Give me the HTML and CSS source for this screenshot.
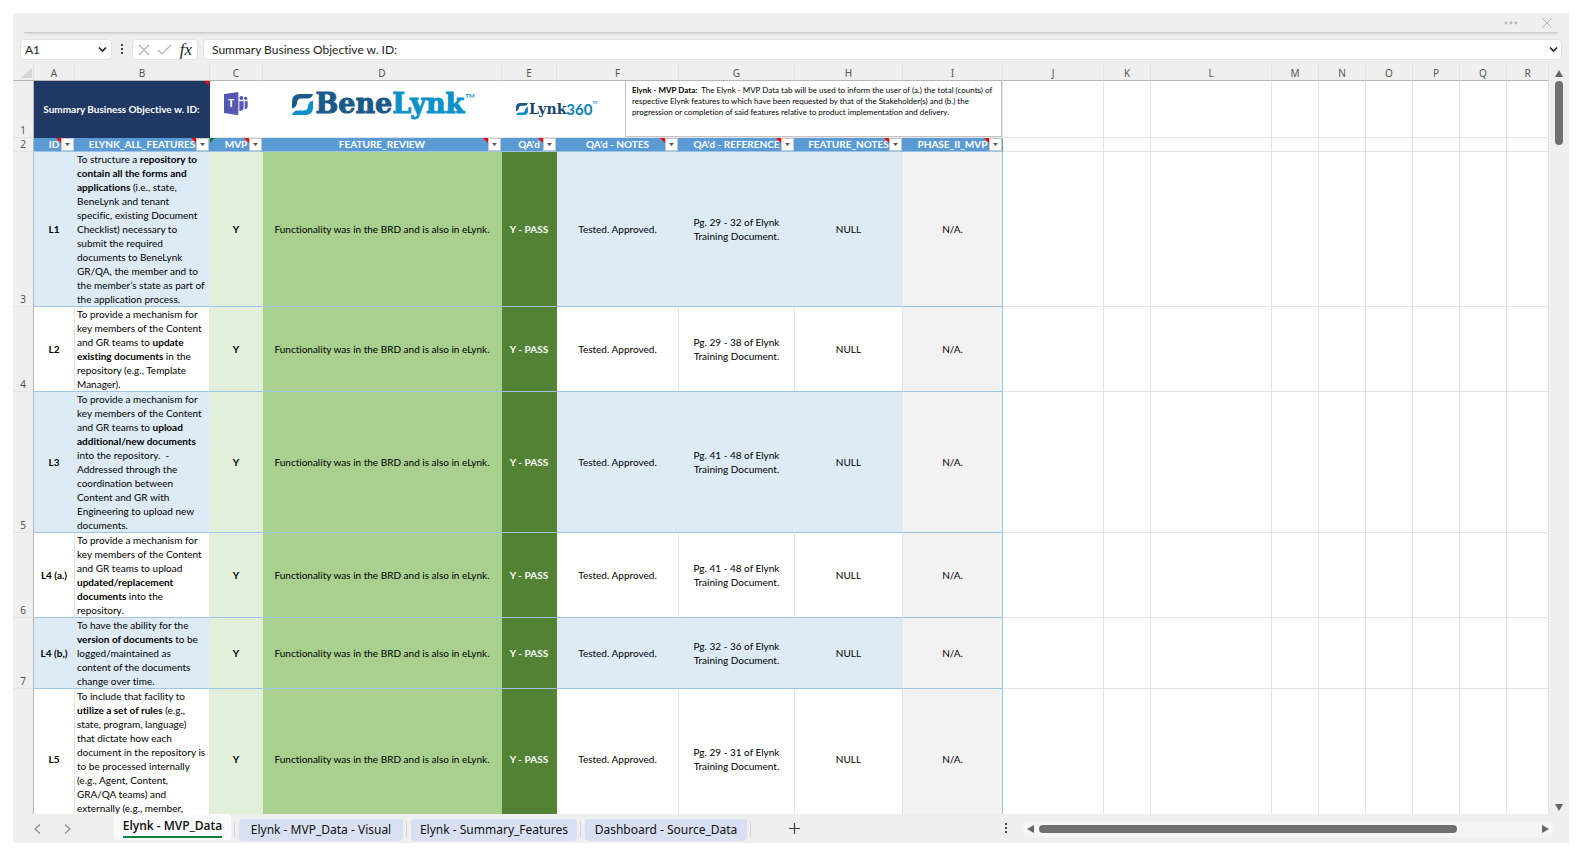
FILE: index.html
```html
<!DOCTYPE html>
<html lang="en">
<head>
<meta charset="utf-8">
<title>Elynk - MVP_Data</title>
<link rel="stylesheet" href="styles.css">
</head>
<body>
<svg class="defs" aria-hidden="true">
  <symbol id="mark" viewBox="0 0 64 64">
    <path class="navy" d="M0 44V23Q0 0 24 0H64Q60 14 47 14H28Q16 14 15 29Q13 41 0 44Z"/>
    <path class="sky" d="M64 20V41Q64 64 40 64H0Q4 50 17 50H36Q48 50 49 35Q51 23 64 20Z"/>
  </symbol>
  <symbol id="caret" viewBox="0 0 5 3"><path d="M0 0H5L2.500 3Z" fill="#555"/></symbol>
</svg>
<main class="window">
  <div class="titlebar">
    <button class="plain" aria-label="More options"><svg width="14" height="4"><g fill="#b4b4b4"><circle cx="2" cy="2" r="1.400"/><circle cx="7" cy="2" r="1.400"/><circle cx="12" cy="2" r="1.400"/></g></svg></button>
    <button class="plain" aria-label="Close"><svg width="10" height="10"><path d="M.5.5l9 9M9.500.5l-9 9" stroke="#b4b4b4"/></svg></button>
  </div>
  <div class="formula-bar">
    <div class="box name-box">
      <input class="name-input" aria-label="Name box" value="A1">
      <button class="plain" aria-label="Open name list"><svg width="9" height="7"><path d="M1 1.500L4.500 5L8 1.500" fill="none" stroke="#222" stroke-width="1.700"/></svg></button>
    </div>
    <svg class="grip" width="3" height="11"><path d="M0 0h2v2H0zM0 4h2v2H0zM0 8h2v2H0z" fill="#444"/></svg>
    <div class="box tools">
      <button class="plain" aria-label="Cancel"><svg width="12" height="12"><path d="M1 1l10 10M11 1L1 11" stroke="#b0b0b0" stroke-width="1.200"/></svg></button>
      <button class="plain" aria-label="Enter"><svg width="15" height="11"><path d="M1 6l4 4L14 1" fill="none" stroke="#b0b0b0" stroke-width="1.200"/></svg></button>
      <button class="plain fx" aria-label="Insert function"><i>fx</i></button>
    </div>
    <div class="box formula">
      <input class="formula-input" aria-label="Formula" value="Summary Business Objective w. ID:">
      <button class="plain" aria-label="Expand formula bar"><svg width="9" height="7"><path d="M1 1.500L4.500 5L8 1.500" fill="none" stroke="#222" stroke-width="1.700"/></svg></button>
    </div>
  </div>
  <div class="body">
    <div class="sheet">
      <table class="grid">
        <colgroup><col class="w-num"><col class="w-a"><col class="w-b"><col class="w-c"><col class="w-d"><col class="w-e"><col class="w-f"><col class="w-g"><col class="w-h"><col class="w-i"><col class="w-j"><col class="w-k"><col class="w-l"><col class="w-m"><col class="w-m"><col class="w-m"><col class="w-m"><col class="w-m"><col></colgroup>
        <thead>
          <tr class="letters"><th><svg width="11" height="10"><path d="M11 0V10H0Z" fill="#d5d5d5"/></svg></th><th>A</th><th>B</th><th>C</th><th>D</th><th>E</th><th>F</th><th>G</th><th>H</th><th>I</th><th>J</th><th>K</th><th>L</th><th>M</th><th>N</th><th>O</th><th>P</th><th>Q</th><th>R</th></tr>
        </thead>
        <tbody>
          <tr class="banner">
            <th class="num">1</th>
            <td class="objective" colspan="2"><span class="note"></span>Summary Business Objective w. ID:</td>
            <td class="logo">
              <svg width="24" height="24" viewBox="0 0 72 72" role="img" aria-label="Teams">
                <g fill="#5558af"><path d="M0 6L43 0V70L0 63Z"/><circle cx="52" cy="18" r="6"/><circle cx="65" cy="19" r="5"/><path d="M46 28H59V46Q59 57 46 57ZM62 28H71V43Q71 52 62 52Z"/></g>
                <text x="21" y="46" class="teams-t">T</text>
              </svg>
            </td>
            <td class="logo">
              <div class="brand brand-big"><svg width="21" height="21"><use href="#mark"/></svg><span class="word"><b>Bene</b><b class="light">Lynk</b></span><span class="tm">TM</span></div>
            </td>
            <td class="info" colspan="5">
              <div class="info-row">
                <div class="brand brand-small"><svg width="12" height="12"><use href="#mark"/></svg><span class="word"><b>Lynk</b></span><b class="digits">360</b><span class="tm">TM</span></div>
                <p class="textbox"><b>Elynk - MVP Data:</b>&nbsp; The Elynk - MVP Data tab will be used to inform the user of (a.) the total (counts) of<br>respective Elynk features to which have been requested by that of the Stakeholder(s) and (b.) the<br>progression or completion of said features relative to product implementation and delivery.</p>
              </div>
            </td>
            <td></td><td></td><td></td><td></td><td></td><td></td><td></td><td></td><td></td>
          </tr>
          <tr class="fields">
            <th class="num">2</th>
            <th>ID<span class="note"></span><button aria-label="Filter ID"><svg width="5" height="3"><use href="#caret"/></svg></button></th>
            <th>ELYNK_ALL_FEATURES<span class="note"></span><button aria-label="Filter ELYNK_ALL_FEATURES"><svg width="5" height="3"><use href="#caret"/></svg></button></th>
            <th><span class="flag"></span>MVP<span class="note"></span><button aria-label="Filter MVP"><svg width="5" height="3"><use href="#caret"/></svg></button></th>
            <th>FEATURE_REVIEW<span class="note"></span><button aria-label="Filter FEATURE_REVIEW"><svg width="5" height="3"><use href="#caret"/></svg></button></th>
            <th>QA'd<span class="note"></span><button aria-label="Filter QA'd"><svg width="5" height="3"><use href="#caret"/></svg></button></th>
            <th>QA'd - NOTES<span class="note"></span><button aria-label="Filter QA'd - NOTES"><svg width="5" height="3"><use href="#caret"/></svg></button></th>
            <th>QA'd - REFERENCE<span class="note"></span><button aria-label="Filter QA'd - REFERENCE"><svg width="5" height="3"><use href="#caret"/></svg></button></th>
            <th>FEATURE_NOTES<span class="note"></span><button aria-label="Filter FEATURE_NOTES"><svg width="5" height="3"><use href="#caret"/></svg></button></th>
            <th>PHASE_II_MVP<span class="note"></span><button aria-label="Filter PHASE_II_MVP"><svg width="5" height="3"><use href="#caret"/></svg></button></th>
            <td></td><td></td><td></td><td></td><td></td><td></td><td></td><td></td><td></td>
          </tr>
          <tr class="row tint">
            <th class="num">3</th><td class="id">L1</td>
            <td class="feature">To structure a <b>repository to<br>contain all the forms and<br>applications</b> (i.e., state,<br>BeneLynk and tenant<br>specific, existing Document<br>Checklist) necessary to<br>submit the required<br>documents to BeneLynk<br>GR/QA, the member and to<br>the member’s state as part of<br>the application process.</td>
            <td class="mvp">Y</td><td class="review">Functionality was in the BRD and is also in eLynk.</td><td class="pass">Y - PASS</td><td>Tested. Approved.</td><td>Pg. 29 - 32 of Elynk<br>Training Document.</td><td>NULL</td><td class="phase">N/A.</td>
            <td></td><td></td><td></td><td></td><td></td><td></td><td></td><td></td><td></td>
          </tr>
          <tr class="row">
            <th class="num">4</th><td class="id">L2</td>
            <td class="feature">To provide a mechanism for<br>key members of the Content<br>and GR teams to <b>update<br>existing documents</b> in the<br>repository (e.g., Template<br>Manager).</td>
            <td class="mvp">Y</td><td class="review">Functionality was in the BRD and is also in eLynk.</td><td class="pass">Y - PASS</td><td>Tested. Approved.</td><td>Pg. 29 - 38 of Elynk<br>Training Document.</td><td>NULL</td><td class="phase">N/A.</td>
            <td></td><td></td><td></td><td></td><td></td><td></td><td></td><td></td><td></td>
          </tr>
          <tr class="row tint">
            <th class="num">5</th><td class="id">L3</td>
            <td class="feature">To provide a mechanism for<br>key members of the Content<br>and GR teams to <b>upload<br>additional/new documents</b><br>into the repository.&nbsp; -<br>Addressed through the<br>coordination between<br>Content and GR with<br>Engineering to upload new<br>documents.</td>
            <td class="mvp">Y</td><td class="review">Functionality was in the BRD and is also in eLynk.</td><td class="pass">Y - PASS</td><td>Tested. Approved.</td><td>Pg. 41 - 48 of Elynk<br>Training Document.</td><td>NULL</td><td class="phase">N/A.</td>
            <td></td><td></td><td></td><td></td><td></td><td></td><td></td><td></td><td></td>
          </tr>
          <tr class="row">
            <th class="num">6</th><td class="id">L4 (a.)</td>
            <td class="feature">To provide a mechanism for<br>key members of the Content<br>and GR teams to upload<br><b>updated/replacement<br>documents</b> into the<br>repository.</td>
            <td class="mvp">Y</td><td class="review">Functionality was in the BRD and is also in eLynk.</td><td class="pass">Y - PASS</td><td>Tested. Approved.</td><td>Pg. 41 - 48 of Elynk<br>Training Document.</td><td>NULL</td><td class="phase">N/A.</td>
            <td></td><td></td><td></td><td></td><td></td><td></td><td></td><td></td><td></td>
          </tr>
          <tr class="row tint">
            <th class="num">7</th><td class="id">L4 (b,)</td>
            <td class="feature">To have the ability for the<br><b>version of documents</b> to be<br>logged/maintained as<br>content of the documents<br>change over time.</td>
            <td class="mvp">Y</td><td class="review">Functionality was in the BRD and is also in eLynk.</td><td class="pass">Y - PASS</td><td>Tested. Approved.</td><td>Pg. 32 - 36 of Elynk<br>Training Document.</td><td>NULL</td><td class="phase">N/A.</td>
            <td></td><td></td><td></td><td></td><td></td><td></td><td></td><td></td><td></td>
          </tr>
          <tr class="row last">
            <th class="num"></th><td class="id">L5</td>
            <td class="feature">To include that facility to<br><b>utilize a set of rules</b> (e.g.,<br>state, program, language)<br>that dictate how each<br>document in the repository is<br>to be processed internally<br>(e.g., Agent, Content,<br>GRA/QA teams) and<br>externally (e.g., member,</td>
            <td class="mvp">Y</td><td class="review">Functionality was in the BRD and is also in eLynk.</td><td class="pass">Y - PASS</td><td>Tested. Approved.</td><td>Pg. 29 - 31 of Elynk<br>Training Document.</td><td>NULL</td><td class="phase">N/A.</td>
            <td></td><td></td><td></td><td></td><td></td><td></td><td></td><td></td><td></td>
          </tr>
        </tbody>
      </table>
    </div>
    <div class="vscroll">
      <button class="plain" aria-label="Scroll up"><svg width="8" height="7"><path d="M4 0L8 7H0Z" fill="#666"/></svg></button>
      <div class="vtrack"><div class="vthumb"></div></div>
      <button class="plain" aria-label="Scroll down"><svg width="8" height="7"><path d="M0 0H8L4 7Z" fill="#666"/></svg></button>
    </div>
  </div>
  <nav class="tabs" aria-label="Sheets">
    <div class="arrows">
      <button class="plain" aria-label="Previous sheet"><svg width="7" height="10"><path d="M6 .5L1 5L6 9.500" fill="none" stroke="#8c8c8c" stroke-width="1.200"/></svg></button>
      <button class="plain" aria-label="Next sheet"><svg width="7" height="10"><path d="M1 .5L6 5L1 9.500" fill="none" stroke="#8c8c8c" stroke-width="1.200"/></svg></button>
    </div>
    <button class="tab active"><span class="tab-label">Elynk - MVP_Data</span></button>
    <span class="divider"></span>
    <button class="tab t-visual">Elynk - MVP_Data - Visual</button>
    <span class="divider"></span>
    <button class="tab t-summary">Elynk - Summary_Features</button>
    <span class="divider"></span>
    <button class="tab t-source">Dashboard - Source_Data</button>
    <span class="divider"></span>
    <button class="plain add" aria-label="Add sheet"><svg width="11" height="11"><path d="M5.500 0V11M0 5.500H11" stroke="#444" stroke-width="1.200"/></svg></button>
    <svg class="grip" width="3" height="11"><path d="M0 0h2v2H0zM0 4h2v2H0zM0 8h2v2H0z" fill="#444"/></svg>
    <div class="hscroll">
      <button class="plain" aria-label="Scroll left"><svg width="7" height="8"><path d="M7 0V8L0 4Z" fill="#666"/></svg></button>
      <div class="htrack"><div class="hthumb"></div></div>
      <button class="plain" aria-label="Scroll right"><svg width="7" height="8"><path d="M0 0V8L7 4Z" fill="#666"/></svg></button>
    </div>
  </nav>
</main>
</body>
</html>
```
FILE: styles.css
```css
* { box-sizing: border-box; }
body {
  margin: 0;
  padding: 13px 12px 13px 13px;
  height: 100vh;
  background: #fff;
  color: #000;
  font: 10px/14px Lato, "Liberation Sans", sans-serif;
  font-variant-ligatures: none;
}
.defs { position: absolute; width: 0; height: 0; }
.navy { fill: #1a5a8a; }
.sky { fill: #0a91c8; }
svg { display: block; flex: none; }
.window {
  display: flex;
  flex-direction: column;
  height: 100%;
  background: #efefef;
}
.plain {
  display: flex;
  align-items: center;
  justify-content: center;
  padding: 0;
  border: 0;
  background: none;
}

.titlebar {
  display: flex;
  align-items: center;
  justify-content: flex-end;
  gap: 24px;
  height: 20px;
  margin: 0 11px;
  padding-right: 6px;
  border-bottom: 1px solid #cfcfcf;
  box-shadow: 0 2px 2px -1px #d4d4d4;
}

.formula-bar {
  display: flex;
  align-items: center;
  padding: 6px 7px 4px;
}
.box {
  display: flex;
  align-items: center;
  height: 21px;
  background: #fff;
  border: 1px solid #e2e2e2;
  border-radius: 4px;
}
.name-box { width: 92px; padding: 0 4px; }
.name-input, .formula-input {
  flex: 1;
  min-width: 0;
  padding: 0;
  border: 0;
  background: none;
  outline: 0;
  color: #222;
  font: 12px/18px Lato, "Liberation Sans", sans-serif;
  font-variant-ligatures: none;
}
.formula-bar .grip { margin: 0 8px 0 9px; }
.tools { width: 66px; padding: 0 5px; justify-content: space-between; }
.fx { color: #222; font: italic 17px/18px "Liberation Serif", serif; }
.formula { flex: 1; margin-left: 5px; padding: 0 3px 0 8px; }

.body { display: flex; flex: 1; min-height: 0; }
.sheet { flex: 1; min-width: 0; overflow: hidden; background: #fff; }
.grid {
  width: 100%;
  table-layout: fixed;
  border-collapse: separate;
  border-spacing: 0;
}
.w-num { width: 21px; }
.w-a { width: 41px; }
.w-b { width: 135px; }
.w-c { width: 53px; }
.w-d { width: 239px; }
.w-e { width: 55px; }
.w-f { width: 122px; }
.w-g { width: 116px; }
.w-h { width: 108px; }
.w-i { width: 100px; }
.w-j { width: 101px; }
.w-k { width: 47px; }
.w-l { width: 121px; }
.w-m { width: 47px; }
.grid th, .grid td {
  padding: 0;
  border-right: 1px solid #e4e4e4;
  border-bottom: 1px solid #e4e4e4;
  text-align: center;
  vertical-align: middle;
  white-space: nowrap;
}
.grid .letters th {
  height: 17px;
  padding-top: 2px;
  background: #efefef;
  border-bottom-color: #b5b5b5;
  border-right-color: #e0e0e0;
  color: #555;
  font: 10px/14px "Noto Sans", sans-serif;
}
.letters svg { margin-left: 8px; }
.grid .num {
  background: #efefef;
  border-right-color: #b5b5b5;
  vertical-align: bottom;
  color: #555;
  font: 10px/13px "Noto Sans", sans-serif;
}

.banner { height: 57px; }
.grid .objective {
  position: relative;
  background: #203864;
  border-color: #203864;
  color: #fff;
  font-weight: bold;
}
.note {
  position: absolute;
  top: 0;
  right: 13px;
  z-index: 1;
  border-top: 5px solid #f00;
  border-left: 5px solid transparent;
}
.objective .note { right: 0; }
.flag {
  position: absolute;
  top: 0;
  left: 0;
  border-top: 5px solid #128020;
  border-right: 5px solid transparent;
}
.grid .logo { border-right-color: #fff; vertical-align: top; }
.logo > svg { margin: 11px auto 0; }
.teams-t { fill: #fff; font: bold 32px "Open Sans", sans-serif; text-anchor: middle; }
.brand { display: flex; color: #1a5a8a; }
.word { font-family: "DejaVu Serif", serif; }
.light { color: #0a91c8; }
.tm { color: #0a91c8; font-weight: bold; }
.brand-big {
  align-items: center;
  justify-content: center;
  padding: 12px 0 0 3px;
}
.brand-big .word {
  margin-left: 2px;
  font-size: 27px;
  line-height: 22px;
  -webkit-text-stroke: 1px currentColor;
}
.brand-big .tm { align-self: flex-start; margin-left: 1px; font-size: 6px; line-height: 6px; }
.info-row { display: flex; justify-content: space-between; height: 56px; }
.brand-small { align-items: center; padding-left: 14px; color: #17486f; }
.brand-small .word { margin-left: 1px; font-size: 14px; }
.brand-small .digits { color: #0a80b4; font: bold 15px/14px Lato, sans-serif; }
.brand-small .tm { align-self: flex-start; padding-top: 20px; font-size: 3px; line-height: 4px; }
.textbox {
  flex: none;
  width: 377px;
  height: 56px;
  margin: 0;
  padding: 4px 6px;
  border: 1px solid #c4c4c4;
  border-top: 0;
  text-align: left;
  font-size: 8px;
  line-height: 11px;
}

.grid .fields th:not(.num) {
  position: relative;
  background: #5b9bd5;
  border-right-color: #5b9bd5;
  border-bottom-color: #9dc3e6;
  color: #fff;
  line-height: 13px;
}
.fields button {
  position: absolute;
  top: 0;
  right: 0;
  display: flex;
  align-items: center;
  justify-content: center;
  width: 13px;
  height: 13px;
  padding: 0;
  border: 1px solid #c8c8c8;
  background: #fff;
}

.grid .row td:nth-child(-n+10) { border-bottom-color: #9dc3e6; }
.row.tint { background: linear-gradient(#ddebf7, #ddebf7) no-repeat; }
.grid .tint td:nth-child(-n+10) { border-right-color: #ddebf7; background: #ddebf7; }
.grid .tint td:nth-child(n+11) { background: #fff; }
.grid .row .id { font-weight: bold; }
.grid .row .feature {
  padding-left: 2px;
  text-align: left;
  vertical-align: top;
}
.grid .row td.mvp:nth-child(4) { background: #e2efda; border-right-color: #e2efda; font-weight: bold; }
.grid .row td.review:nth-child(5) { background: #a9d08e; border-right-color: #a9d08e; }
.grid .row td.pass:nth-child(6) { background: #548235; border-right-color: #548235; color: #fff; font-weight: bold; }
.grid .row td.phase:nth-child(10) { background: #f2f2f2; border-right-color: #9dc3e6; }
.last { height: 140px; }

.vscroll {
  display: flex;
  flex-direction: column;
  align-items: center;
  width: 20px;
  padding: 6px 0 3px;
}
.vtrack { flex: 1; width: 8px; padding: 4px 0; }
.vthumb { height: 64px; background: #707070; border-radius: 4px; }

.tabs {
  display: flex;
  align-items: center;
  height: 29px;
  padding: 0 15px 0 0;
}
.arrows { display: flex; gap: 23px; width: 101px; padding-left: 21px; }
.tab {
  height: 22px;
  margin-top: 2px;
  padding: 1px 0 0;
  border: 0;
  border-radius: 4px;
  background: #dae0f3;
  color: #111;
  font: 12px/20px "Noto Sans", sans-serif;
}
.divider { width: 1px; height: 16px; margin: 0 4px 0 3px; background: #d4d4d4; }
.active {
  align-self: flex-start;
  width: 117px;
  height: 26px;
  margin: 0;
  padding: 0;
  background: #fafbfd;
}
.tab-label {
  display: inline-block;
  border-bottom: 2px solid #107c41;
  font: 600 12px/20px "Open Sans", sans-serif;
}
.t-visual { width: 164px; }
.t-summary { width: 166px; }
.t-source { width: 162px; }
.add { margin-left: 34px; }
.tabs > .grip { margin-left: auto; margin-right: 14px; }
.hscroll {
  display: flex;
  align-items: center;
  flex: 0 1 532px;
  height: 16px;
  padding: 0 5px;
  border-radius: 8px;
  background: #f5f5f5;
}
.htrack { flex: 1; padding: 0 5px; }
.hthumb { width: 84%; height: 8px; background: #707070; border-radius: 4px; }
```
